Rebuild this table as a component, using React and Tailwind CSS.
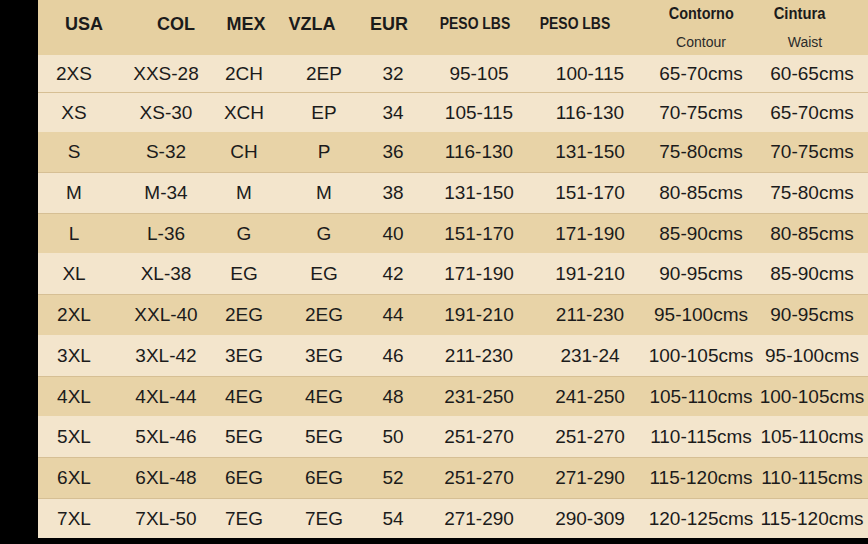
import React from "react";

const rows = [
  ["2XS", "XXS-28", "2CH", "2EP", "32", "95-105", "100-115", "65-70cms", "60-65cms"],
  ["XS", "XS-30", "XCH", "EP", "34", "105-115", "116-130", "70-75cms", "65-70cms"],
  ["S", "S-32", "CH", "P", "36", "116-130", "131-150", "75-80cms", "70-75cms"],
  ["M", "M-34", "M", "M", "38", "131-150", "151-170", "80-85cms", "75-80cms"],
  ["L", "L-36", "G", "G", "40", "151-170", "171-190", "85-90cms", "80-85cms"],
  ["XL", "XL-38", "EG", "EG", "42", "171-190", "191-210", "90-95cms", "85-90cms"],
  ["2XL", "XXL-40", "2EG", "2EG", "44", "191-210", "211-230", "95-100cms", "90-95cms"],
  ["3XL", "3XL-42", "3EG", "3EG", "46", "211-230", "231-24", "100-105cms", "95-100cms"],
  ["4XL", "4XL-44", "4EG", "4EG", "48", "231-250", "241-250", "105-110cms", "100-105cms"],
  ["5XL", "5XL-46", "5EG", "5EG", "50", "251-270", "251-270", "110-115cms", "105-110cms"],
  ["6XL", "6XL-48", "6EG", "6EG", "52", "251-270", "271-290", "115-120cms", "110-115cms"],
  ["7XL", "7XL-50", "7EG", "7EG", "54", "271-290", "290-309", "120-125cms", "115-120cms"],
];

const rowStyles = [
  "h-[37px] bg-[#f3e5cc]",
  "h-[40px] bg-[#f3e5cc] border-t border-[#d6bf94]",
  "h-[40px] bg-[#e8d3a7]",
  "h-[41px] bg-[#f3e5cc] border-t border-[#d6bf94]",
  "h-[40px] bg-[#e8d3a7] border-t border-[#d6bf94]",
  "h-[41px] bg-[#f3e5cc]",
  "h-[41px] bg-[#e8d3a7] border-t border-[#d6bf94]",
  "h-[41px] bg-[#f3e5cc]",
  "h-[40px] bg-[#e8d3a7] border-t border-[#d6bf94]",
  "h-[41px] bg-[#f3e5cc]",
  "h-[41px] bg-[#e8d3a7] border-t border-[#d6bf94]",
  "h-[40px] bg-[#f3e5cc] border-t border-[#d6bf94]",
];

const cellPad = [
  "pr-[10px]",
  "pl-[8px]",
  "",
  "pl-[6px]",
  "pr-[8px]",
  "pr-[12px]",
  "",
  "",
  "",
];

const gridCols =
  "grid grid-cols-[82px_84px_80px_74px_78px_98px_112px_110px_112px]";

export default function App() {
  return (
    <div
      className="w-[868px] h-[544px] bg-black flex text-[#1b1b1b]"
      style={{ fontFamily: '"Liberation Sans", Arial, sans-serif' }}
    >
      <div className="w-[38px] shrink-0" />
      <div className="w-[830px] flex flex-col">
        <div className={`${gridCols} h-[55px] bg-[#e6d0a1] font-bold text-[18px] leading-[20px]`}>
          <div className="flex items-center justify-center pb-[7px] pl-[10px]">USA</div>
          <div className="flex items-center justify-center pb-[7px] pl-[28px]">COL</div>
          <div className="flex items-center justify-center pb-[7px] pl-[4px]">MEX</div>
          <div className="flex items-center justify-center pb-[7px] pr-[18px]">VZLA</div>
          <div className="flex items-center justify-center pb-[7px] pr-[16px]">EUR</div>
          <div className="flex items-center justify-center pb-[7px] pr-[20px]">
            <span className="inline-block whitespace-nowrap scale-x-[0.82] text-[17px]">PESO LBS</span>
          </div>
          <div className="flex items-center justify-center pb-[7px] pr-[30px]">
            <span className="inline-block whitespace-nowrap scale-x-[0.82] text-[17px]">PESO LBS</span>
          </div>
          <div className="flex flex-col items-center pt-[4px] gap-[10px]">
            <span className="inline-block whitespace-nowrap scale-x-[0.85] text-[17px] leading-[20px]">Contorno</span>
            <span className="font-normal text-[14px] leading-[16px] text-[#2a2a2a]">Contour</span>
          </div>
          <div className="flex flex-col items-center pt-[4px] gap-[10px]">
            <span className="inline-block whitespace-nowrap scale-x-[0.87] text-[17px] leading-[20px] pr-[28px]">Cintura</span>
            <span className="font-normal text-[14px] leading-[16px] text-[#2a2a2a] pr-[14px]">Waist</span>
          </div>
        </div>
        {rows.map((r, i) => (
          <div key={i} className={`${gridCols} ${rowStyles[i]} text-[19px] leading-[22px]`}>
            {r.map((c, j) => (
              <div
                key={j}
                className={`flex items-center justify-center whitespace-nowrap ${cellPad[j]}`}
              >
                {c}
              </div>
            ))}
          </div>
        ))}
      </div>
    </div>
  );
}
